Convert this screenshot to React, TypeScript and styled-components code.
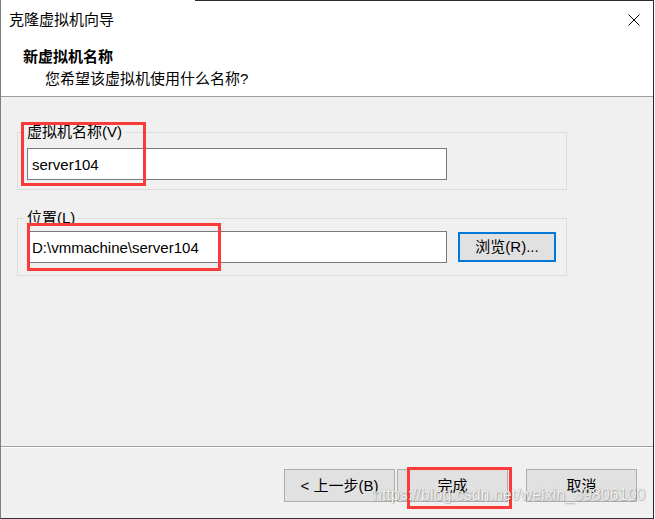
import React from "react";
import styled, { createGlobalStyle } from "styled-components";

const Global = createGlobalStyle`
  html, body { margin: 0; padding: 0; background: #fff; }
  body { font-family: "Liberation Sans", "Noto Sans CJK SC", sans-serif; }
  * { box-sizing: border-box; }
`;

const Window = styled.div`
  position: relative;
  width: 654px;
  height: 519px;
  display: flex;
  flex-direction: column;
  background: #f0f0f0;
  border-left: 1px solid #7f7f7f;
  border-right: 1px solid #2b2b2b;
  border-bottom: 1px solid #333;
  font-size: 15px;
  color: #000;
  overflow: hidden;
`;

const TitleBar = styled.div`
  height: 40px;
  flex: none;
  display: flex;
  align-items: center;
  justify-content: space-between;
  padding: 0 13px 0 8px;
  background: linear-gradient(to right, transparent 194px, #2b2b2b 194px) top / 100% 1px no-repeat, #fff;
`;

const Title = styled.span`
  font-size: 15px;
  line-height: 20px;
`;

const CloseIcon = styled.svg`
  display: block;
  width: 12px;
  height: 12px;
`;

const Header = styled.div`
  height: 57px;
  flex: none;
  background: #fff;
  border-bottom: 1px solid #a0a0a0;
  padding: 7px 0 0 22px;
`;

const HeaderTitle = styled.div`
  font-weight: bold;
  font-size: 15px;
  line-height: 20px;
`;

const HeaderSub = styled.div`
  margin-top: 2px;
  padding-left: 22px;
  font-size: 15px;
  line-height: 20px;
`;

const Content = styled.div`
  flex: 1;
  padding: 25px 0 0 16px;
`;

const Group = styled.fieldset<{ $pt: number; $pb: number }>`
  margin: 0;
  width: 550px;
  min-width: 0;
  border: 1px solid #dcdcdc;
  padding: ${(p) => p.$pt}px 9px ${(p) => p.$pb}px;
  & + & {
    margin-top: 18px;
  }
`;

const Legend = styled.legend`
  padding: 0 3px;
  margin-left: -3px;
  font-size: 15px;
  line-height: 20px;
`;

const Row = styled.div`
  display: flex;
  align-items: center;
  gap: 11px;
`;

const TextBox = styled.input`
  width: 420px;
  height: 32px;
  border: 1px solid #7a7a7a;
  background: #fff;
  padding: 0 4px;
  margin: 0;
  font-family: "Liberation Sans", "Noto Sans CJK SC", sans-serif;
  font-size: 15px;
  color: #000;
  outline: none;
`;

const Button = styled.button<{ $focused?: boolean; $w: number; $h: number; $ml?: number }>`
  width: ${(p) => p.$w}px;
  height: ${(p) => p.$h}px;
  margin: 0 0 0 ${(p) => p.$ml ?? 0}px;
  padding: 0;
  background: #e1e1e1;
  border: ${(p) => (p.$focused ? "2px solid #0078d7" : "1px solid #adadad")};
  font-family: "Liberation Sans", "Noto Sans CJK SC", sans-serif;
  font-size: 15px;
  line-height: 20px;
  color: #000;
  display: flex;
  align-items: center;
  justify-content: center;
`;

const Footer = styled.div`
  height: 72px;
  flex: none;
  border-top: 1px solid #a0a0a0;
  box-shadow: inset 0 1px 0 #fff;
  display: flex;
  justify-content: flex-end;
  align-items: flex-start;
  padding: 22px 16px 0 0;
  gap: 2px;
`;

const Mark = styled.div<{ $l: number; $t: number; $w: number; $h: number }>`
  position: absolute;
  left: ${(p) => p.$l}px;
  top: ${(p) => p.$t}px;
  width: ${(p) => p.$w}px;
  height: ${(p) => p.$h}px;
  border: 3px solid #fb3a3a;
  pointer-events: none;
`;

const Watermark = styled.div`
  position: absolute;
  left: 372px;
  top: 485px;
  font-family: "Liberation Sans", sans-serif;
  font-size: 16px;
  line-height: 20px;
  color: rgba(255, 255, 255, 0.9);
  text-shadow: 0 0 1px rgba(0, 0, 0, 0.35), 1px 1px 1px rgba(0, 0, 0, 0.2);
  white-space: nowrap;
  pointer-events: none;
`;

export default function App() {
  return (
    <>
      <Global />
      <Window>
        <TitleBar>
          <Title>克隆虚拟机向导</Title>
          <CloseIcon viewBox="0 0 12 12">
            <path d="M0.5 0.5 L11.5 11.5 M11.5 0.5 L0.5 11.5" stroke="#000" strokeWidth="1" fill="none" />
          </CloseIcon>
        </TitleBar>
        <Header>
          <HeaderTitle>新虚拟机名称</HeaderTitle>
          <HeaderSub>您希望该虚拟机使用什么名称?</HeaderSub>
        </Header>
        <Content>
          <Group $pt={6} $pb={9}>
            <Legend>虚拟机名称(V)</Legend>
            <TextBox readOnly value="server104" />
          </Group>
          <Group $pt={3} $pb={12}>
            <Legend>位置(L)</Legend>
            <Row>
              <TextBox readOnly value="D:\vmmachine\server104" />
              <Button $focused $w={98} $h={30}>浏览(R)...</Button>
            </Row>
          </Group>
        </Content>
        <Footer>
          <Button $w={111} $h={33}>&lt; 上一步(B)</Button>
          <Button $w={111} $h={33}>完成</Button>
          <Button $w={111} $h={33} $ml={16}>取消</Button>
        </Footer>
        <Mark $l={20} $t={122} $w={125} $h={64} />
        <Mark $l={26} $t={223} $w={194} $h={48} />
        <Mark $l={406} $t={467} $w={105} $h={42} />
        <Watermark>https://blog.csdn.net/weixin_39806100</Watermark>
      </Window>
    </>
  );
}
